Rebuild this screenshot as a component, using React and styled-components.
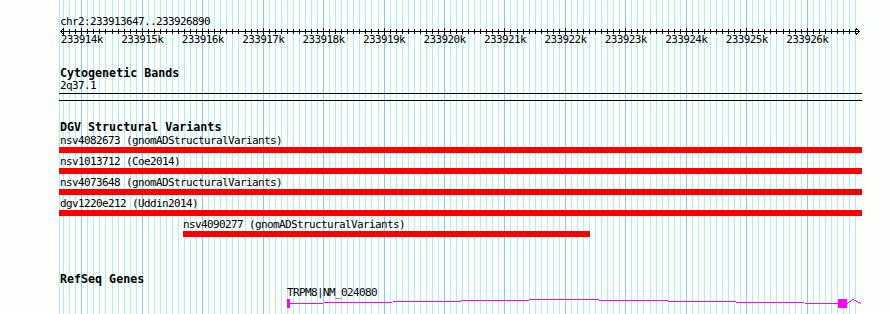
import styled, { createGlobalStyle } from "styled-components";

//view + scale
const VIEW_START = 233913647;
const VIEW_END = 233926890;
const BASE = 233914000;
const ORIGIN_X = 81.3;
const SCALE = 0.06045; // px per bp
const TRACK_LEFT = 59;
const TRACK_W = 803;

const rx = (bp) => ORIGIN_X + (bp - BASE) * SCALE;
const tx = (bp) => {
  if (bp <= VIEW_START) return 0;
  if (bp >= VIEW_END) return TRACK_W;
  return Math.round(rx(bp) - TRACK_LEFT);
};

const ticks = [];
for (let bp = 233913700; bp <= 233926800; bp += 100) ticks.push(bp);

const variants = [
  { id: "nsv4082673", src: "gnomADStructuralVariants", start: 233880000, end: 234050000 },
  { id: "nsv1013712", src: "Coe2014", start: 233700000, end: 234300000 },
  { id: "nsv4073648", src: "gnomADStructuralVariants", start: 233895000, end: 233990000 },
  { id: "dgv1220e212", src: "Uddin2014", start: 233610000, end: 234120000 },
  { id: "nsv4090277", src: "gnomADStructuralVariants", start: 233915682, end: 233922414 },
];

const gene = {
  name: "TRPM8|NM_024080",
  exons: [
    [233917403, 233917453],
    [233926518, 233926667],
  ],
};

const GlobalStyle = createGlobalStyle`
  html, body {
    margin: 0;
    padding: 0;
    background: #fdfffd;
  }
`;

const App = () => {
  const g0 = tx(gene.exons[0][0]);
  const g1 = tx(gene.exons[0][1]);
  const g2 = tx(gene.exons[1][0]);
  const g3 = tx(gene.exons[1][1]);
  const mid = (g1 + g2) / 2;

  return (
    <Page>
      <GlobalStyle />
      {/* grid behind the tracks */}
      <GridLayer width="890" height="314" shapeRendering="crispEdges">
        <line x1="59.5" x2="59.5" y1="0" y2="314" stroke="#aeeeee" />
        {ticks.map((bp) => {
          const x = Math.round(rx(bp)) + 0.5;
          return (
            <line
              key={bp}
              x1={x}
              x2={x}
              y1="0"
              y2="314"
              stroke={bp % 1000 === 0 ? "#88c8ee" : "#aeeeee"}
            />
          );
        })}
      </GridLayer>

      <Panel>
        <PositionLabel>chr2:233913647..233926890</PositionLabel>
        <RulerSvg width={TRACK_W} height="20" shapeRendering="crispEdges">
          <line x1="1" x2="801" y1="4.5" y2="4.5" stroke="#000" />
          <polyline points="5,1.5 1.5,4.5 5,7.5" fill="none" stroke="#000" />
          <polyline points="797,1.5 800.5,4.5 797,7.5" fill="none" stroke="#000" />
          {ticks.map((bp) => {
            const x = Math.round(rx(bp) - TRACK_LEFT) + 0.5;
            const major = bp % 1000 === 0;
            return (
              <line
                key={bp}
                x1={x}
                x2={x}
                y1={major ? 1 : 2}
                y2={major ? 8 : 7}
                stroke="#000"
              />
            );
          })}
          {ticks
            .filter((bp) => bp % 1000 === 0)
            .map((bp) => (
              <TickText key={bp} x={rx(bp) - TRACK_LEFT - 20.5} y="16.3">
                {bp / 1000}k
              </TickText>
            ))}
        </RulerSvg>

        <TrackTitle $top={20}>Cytogenetic Bands</TrackTitle>
        <SmallText>2q37.1</SmallText>
        <BandBox />

        <TrackTitle $top={20}>DGV Structural Variants</TrackTitle>
        <FeatureList>
          {variants.map((v) => {
            const left = tx(v.start);
            const right = tx(v.end);
            return (
              <FeatureRow key={v.id}>
                <SmallText style={{ marginLeft: left + (v.start < VIEW_START ? 1 : 0) }}>
                  {v.id} ({v.src})
                </SmallText>
                <Bar style={{ marginLeft: left, width: right - left }} />
              </FeatureRow>
            );
          })}
        </FeatureList>

        <TrackTitle $top={33}>RefSeq Genes</TrackTitle>
        <GeneLabel style={{ marginLeft: g0 }}>{gene.name}</GeneLabel>
        <GeneSvg width={TRACK_W} height="12" shapeRendering="crispEdges">
          <polyline
            points={`${g1},5.5 ${mid},1.5 ${g2},5.5`}
            fill="none"
            stroke="#ff00ff"
          />
          <polyline
            points={`${g3},5.5 ${g3 + 6},1.5 ${TRACK_W - 1},5.5`}
            fill="none"
            stroke="#ff00ff"
          />
          <rect x={g0} y="1" width={g1 - g0} height="9" fill="#ff00ff" />
          <rect x={g2} y="1" width={g3 - g2} height="9" fill="#ff00ff" />
        </GeneSvg>
      </Panel>
    </Page>
  );
};

export default App;

//styled
const Page = styled.div`
  position: relative;
  width: 890px;
  height: 314px;
  overflow: hidden;
  background: #fdfffd;
  color: #000;
  font-family: "DejaVu Sans Mono", "Liberation Mono", monospace;
  font-size: 11px;
  letter-spacing: -0.62px;
`;

const GridLayer = styled.svg`
  position: absolute;
  top: 0;
  left: 0;
  z-index: 0;
`;

const Panel = styled.div`
  position: relative;
  z-index: 1;
  display: flex;
  flex-direction: column;
  width: ${TRACK_W}px;
  padding-left: ${TRACK_LEFT}px;
`;

const PositionLabel = styled.div`
  margin-top: 16px;
  padding-left: 1px;
  line-height: 11px;
  white-space: nowrap;
`;

const RulerSvg = styled.svg`
  display: block;
  overflow: visible;
`;

const TickText = styled.text`
  font-family: "DejaVu Sans Mono", "Liberation Mono", monospace;
  font-size: 11px;
  letter-spacing: -0.62px;
  fill: #000;
`;

const TrackTitle = styled.div`
  margin-top: ${(p) => p.$top}px;
  padding-left: 1px;
  font-size: 11.667px;
  font-weight: bold;
  letter-spacing: 0;
  line-height: 13px;
  white-space: nowrap;
`;

const SmallText = styled.div`
  line-height: 11px;
  padding-left: 1px;
  white-space: nowrap;
`;

const BandBox = styled.div`
  margin-top: 2px;
  height: 6px;
  border-top: 1px solid #000;
  border-bottom: 1px solid #000;
`;

const FeatureList = styled.div`
  display: flex;
  flex-direction: column;
  margin-top: 1px;
`;

const FeatureRow = styled.div`
  display: flex;
  flex-direction: column;
  align-items: flex-start;
  padding-bottom: 3px;

  ${SmallText} {
    padding-left: 0;
  }
`;

const Bar = styled.div`
  margin-top: 1px;
  height: 6px;
  background: #ff0000;
`;

const GeneLabel = styled.div`
  margin-top: 1px;
  line-height: 11px;
  white-space: nowrap;
`;

const GeneSvg = styled.svg`
  display: block;
`;
